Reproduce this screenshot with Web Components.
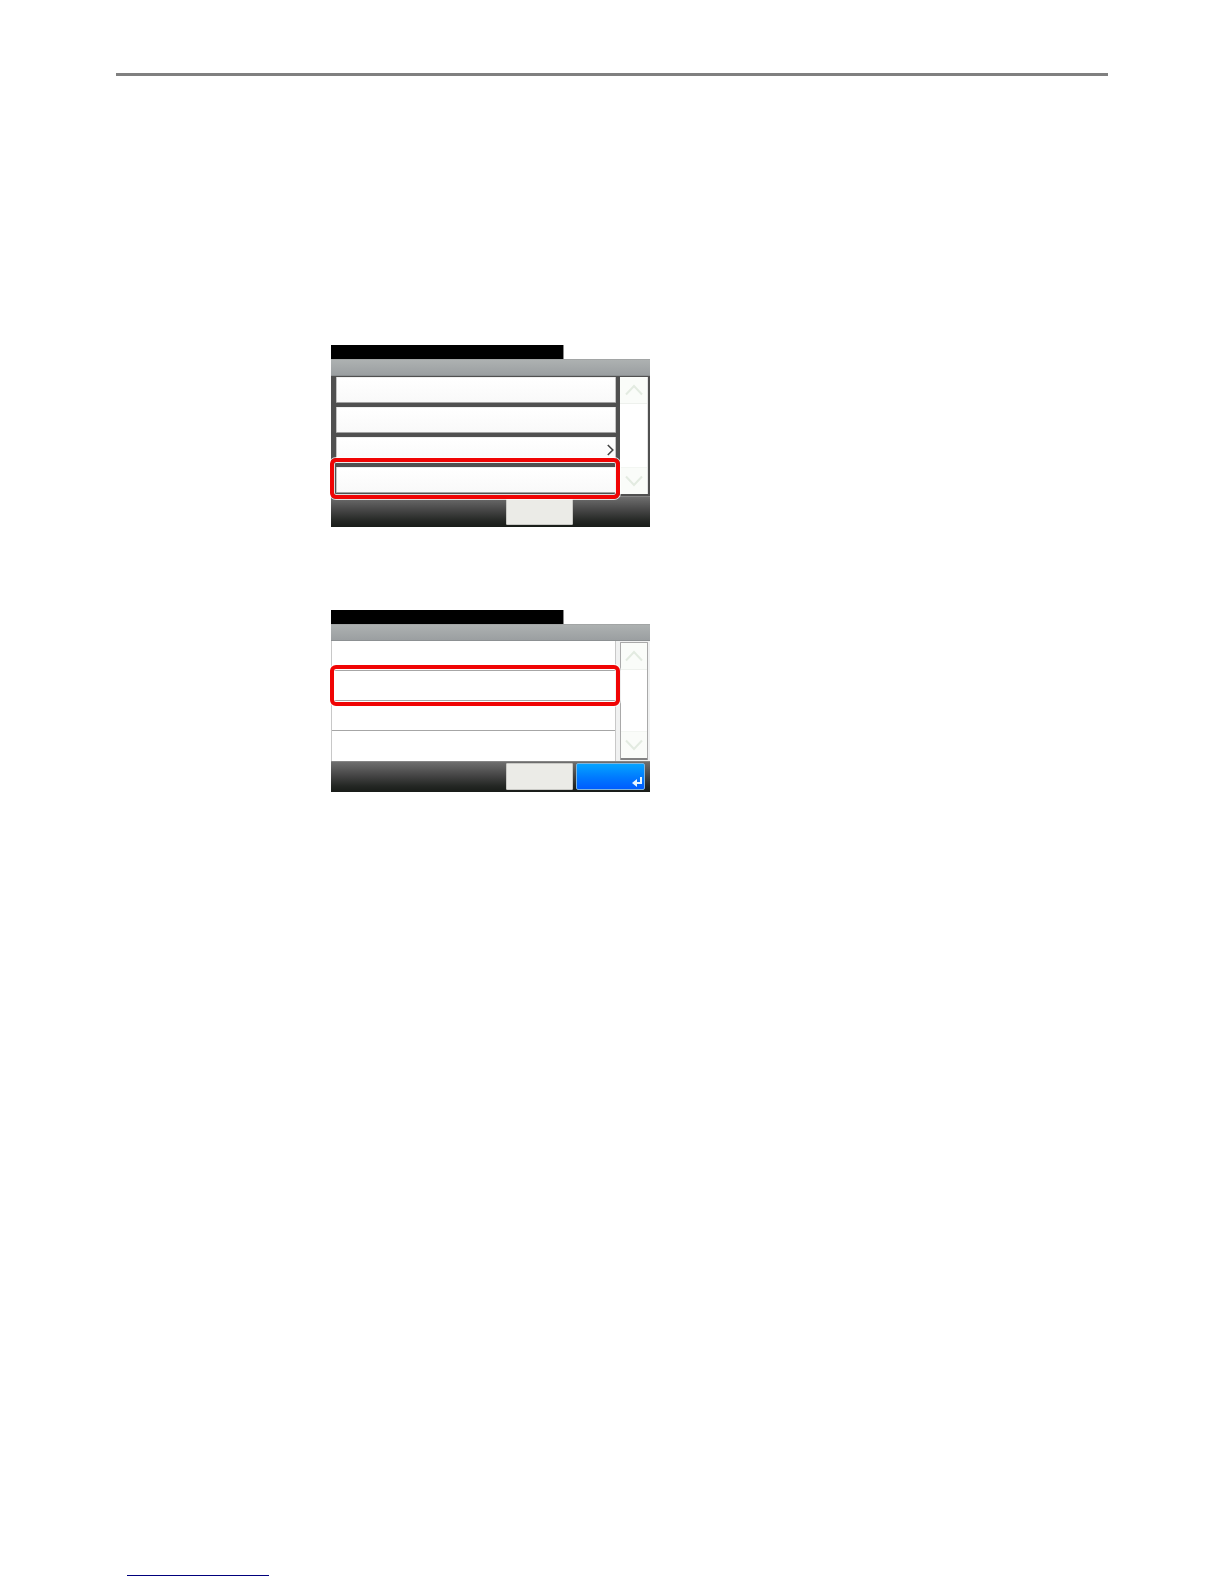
<!DOCTYPE html>
<html lang="en">
<head>
<meta charset="utf-8">
<title>Panel settings</title>
<style>
body {
    margin: 0;
    background: #fff;
    font-family: "Liberation Sans", Arial, sans-serif;
    font-size: 12px;
}
</style>
</head>
<body>
<manual-page>
    <touch-panel>
        <panel-row></panel-row>
        <panel-row></panel-row>
        <panel-row more></panel-row>
        <panel-row marked></panel-row>
        <panel-key slot="keys" label="Back"></panel-key>
    </touch-panel>
    <touch-panel flat>
        <panel-row flat></panel-row>
        <panel-row flat marked></panel-row>
        <panel-row flat></panel-row>
        <panel-row flat></panel-row>
        <panel-key slot="keys" label="Cancel"></panel-key>
        <panel-key slot="keys" label="OK" enter></panel-key>
    </touch-panel>
</manual-page>

<script>
class ManualPage extends HTMLElement {

    constructor() {
        super();

        this.root = this.attachShadow({ mode: 'open' });

        this.root.innerHTML = `
        <style>
        :host {
            display: flex;
            flex-direction: column;
            box-sizing: border-box;
            min-height: 100vh;
            padding: 73px 116px 8px;
        }
        hr {
            width: 100%;
            height: 3px;
            margin: 0;
            border: 0;
            background: #808080;
        }
        main {
            flex: 1;
            display: flex;
            flex-direction: column;
            gap: 83px;
            padding: 269px 0 0 215px;
        }
        a {
            display: block;
            width: 142px;
            height: 12px;
            margin-left: 11px;
            border-bottom: 1px solid #00007c;
        }
        </style>
        <hr>
        <main><slot></slot></main>
        <footer><a href="#contents" aria-label="Contents"></a></footer>
        `;
    }
}
customElements.define('manual-page', ManualPage);


class TouchPanel extends HTMLElement {

    constructor() {
        super();

        this.root = this.attachShadow({ mode: 'open' });

        this.root.innerHTML = `
        <style>
        :host {
            display: block;
            width: 100%;
            max-width: 319px;
        }
        .status {
            box-sizing: border-box;
            width: 73%;
            height: 14px;
            border-right: 1px solid #8a8a8a;
            background: #000;
        }
        .title {
            box-sizing: border-box;
            height: 17px;
            border-top: 1px solid #a2a5a5;
            border-bottom: 1px solid #8c9092;
            background: linear-gradient(#adb1b1, #9b9fa1);
        }
        .body {
            display: flex;
            gap: 4px;
            padding-right: 2px;
            background: #505050;
        }
        .list {
            flex: 1;
            display: grid;
            grid-auto-rows: 26px;
            gap: 4px;
            padding: 1px 0 3px 5px;
        }
        :host([flat]) .body {
            background: #f0f1f1;
        }
        :host([flat]) .list {
            grid-auto-rows: 30px;
            gap: 0;
            padding: 0;
            border-left: 1px solid #c8c8c8;
            border-right: 1px solid #c8c8c8;
            background: #fff;
        }
        .keys {
            display: flex;
            box-sizing: border-box;
            height: 31px;
            gap: 3px;
            padding: 1px 5px 2px 175px;
            border-top: 1px solid #858585;
            background: linear-gradient(#6e6e6e, #454545 45%, #242724 80%, #181c18);
        }
        </style>
        <div class="status"></div>
        <div class="title"></div>
        <div class="body">
            <div class="list"><slot></slot></div>
            <scroll-rail></scroll-rail>
        </div>
        <div class="keys"><slot name="keys"></slot></div>
        `;
    }

    connectedCallback() {
        this.root.querySelector('scroll-rail').toggleAttribute('flat', this.hasAttribute('flat'));
    }
}
customElements.define('touch-panel', TouchPanel);


class PanelRow extends HTMLElement {

    constructor() {
        super();

        this.root = this.attachShadow({ mode: 'open' });

        this.root.innerHTML = `
        <style>
        :host {
            display: block;
            position: relative;
        }
        button {
            display: flex;
            align-items: center;
            justify-content: flex-end;
            box-sizing: border-box;
            width: 100%;
            height: 100%;
            padding: 0 1px;
            border: 1px solid #c4c4c4;
            border-top-color: #f0f0f0;
            border-bottom-color: #a2a2a2;
            border-radius: 1px;
            background: linear-gradient(#fff, #f9f9f9);
        }
        :host([flat]) button {
            border: 0;
            border-bottom: 1px solid #a6a6a6;
            border-radius: 0;
            background: #fff;
        }
        :host([flat]:last-of-type) button {
            border-bottom: 0;
        }
        svg {
            display: none;
        }
        :host([more]) svg {
            display: block;
        }
        /* red ring round the row to press */
        :host([marked])::after {
            content: "";
            position: absolute;
            z-index: 1;
            inset: -9px -4px -6px -6px;
            border: 4px solid #f00404;
            border-radius: 6px;
            box-shadow: 0 0 0 1px #fffc, inset 0 0 0 1px #fffc;
            pointer-events: none;
        }
        :host([marked][flat])::after {
            inset: -6px -5px -5px -2px;
        }
        </style>
        <button type="button" aria-label="Menu item">
            <svg width="7" height="12" viewBox="0 0 7 12" fill="none" stroke="#444" stroke-width="1.6">
                <path d="M.8 1 5.8 6 .8 11"/>
            </svg>
        </button>
        `;
    }
}
customElements.define('panel-row', PanelRow);


class ScrollRail extends HTMLElement {

    constructor() {
        super();

        this.root = this.attachShadow({ mode: 'open' });

        this.root.innerHTML = `
        <style>
        :host {
            display: flex;
            flex-direction: column;
            justify-content: space-between;
            box-sizing: border-box;
            width: 28px;
            margin: 1px 0 2px;
            border-right: 1px solid #e2e2e2;
            background: #fff;
        }
        :host([flat]) {
            margin: 1px 0;
            border: 1px solid #a9a9a9;
            border-bottom: 2px solid #828282;
            border-radius: 1px;
        }
        button {
            display: flex;
            align-items: center;
            justify-content: center;
            box-sizing: border-box;
            height: 27px;
            padding: 0;
            border: 0;
            border-bottom: 1px solid #eef1ed;
            background: #fafcf9;
        }
        .down {
            border-top: 1px solid #f3f6f2;
            border-bottom: 0;
        }
        </style>
        <button type="button" aria-label="Scroll up">
            <svg width="18" height="12" viewBox="0 0 18 12" fill="none" stroke="#e3ebe1" stroke-width="2">
                <path d="M1 10.5 9 2 17 10.5"/>
            </svg>
        </button>
        <button type="button" class="down" aria-label="Scroll down">
            <svg width="18" height="12" viewBox="0 0 18 12" fill="none" stroke="#e3ebe1" stroke-width="2">
                <path d="M1 1.5 9 10 17 1.5"/>
            </svg>
        </button>
        `;
    }
}
customElements.define('scroll-rail', ScrollRail);


class PanelKey extends HTMLElement {

    constructor() {
        super();

        this.root = this.attachShadow({ mode: 'open' });

        this.root.innerHTML = `
        <style>
        :host {
            display: block;
            width: 67px;
        }
        :host([enter]) {
            width: 69px;
        }
        button {
            display: flex;
            align-items: flex-end;
            justify-content: flex-end;
            box-sizing: border-box;
            width: 100%;
            height: 100%;
            padding: 1px;
            border: 1px solid #c9c9c5;
            border-radius: 1px;
            background: #ebebe7;
        }
        :host([enter]) button {
            border-color: #7fb4dc;
            border-radius: 2px;
            background: linear-gradient(#04a4ff, #0079ff 55%, #005cff);
        }
        svg {
            display: none;
        }
        :host([enter]) svg {
            display: block;
        }
        </style>
        <button type="button">
            <svg width="11" height="12" viewBox="0 0 11 12">
                <path d="M9 1V7H4" fill="none" stroke="#e6f5ff" stroke-width="2"/>
                <path d="M0 7 5 3V11Z" fill="#e6f5ff"/>
            </svg>
        </button>
        `;
    }

    static get observedAttributes() {
        return ['label'];
    }

    attributeChangedCallback(attrName, oldVal, newVal) {
        if (attrName === 'label') {
            this.root.querySelector('button').setAttribute('aria-label', newVal);
        }
    }
}
customElements.define('panel-key', PanelKey);
</script>
</body>
</html>
